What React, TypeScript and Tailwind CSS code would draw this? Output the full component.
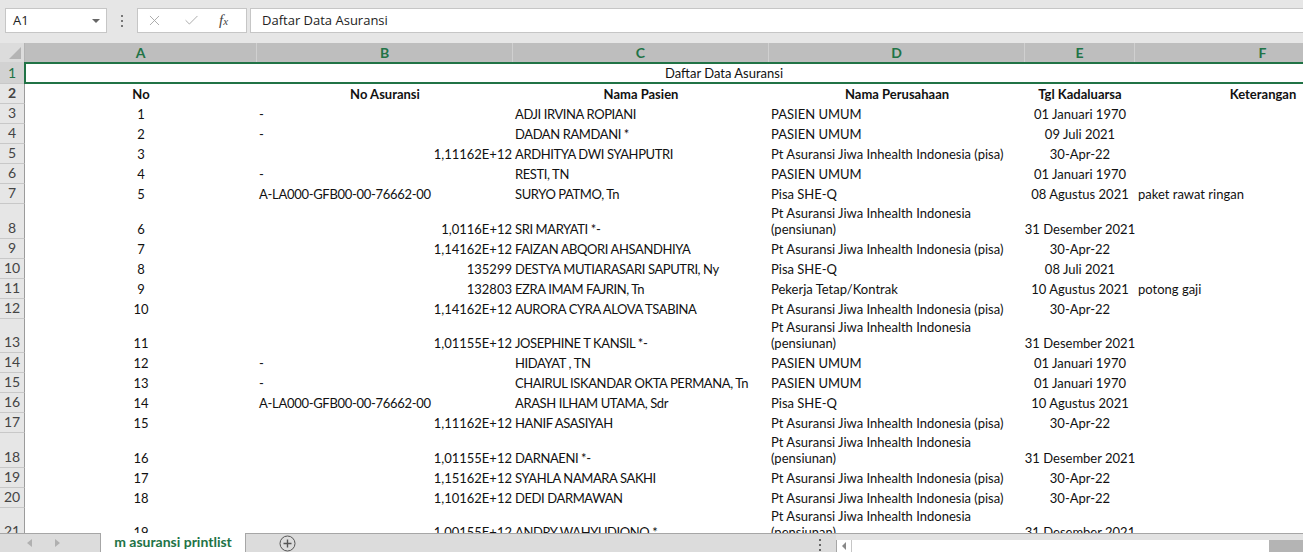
import { X, Check } from 'lucide-react';

type Row = {
  r: number;
  no: string;
  noRight?: boolean;
  nama: string;
  pers: string;
  pers2?: string;
  tgl: string;
  ket?: string;
};

const PISA = 'Pt Asuransi Jiwa Inhealth Indonesia (pisa)';
const PT = 'Pt Asuransi Jiwa Inhealth Indonesia';

const rows: Row[] = [
  { r: 1, no: '-', nama: 'ADJI IRVINA ROPIANI', pers: 'PASIEN UMUM', tgl: '01 Januari 1970' },
  { r: 2, no: '-', nama: 'DADAN RAMDANI *', pers: 'PASIEN UMUM', tgl: '09 Juli 2021' },
  { r: 3, no: '1,11162E+12', noRight: true, nama: 'ARDHITYA DWI SYAHPUTRI', pers: PISA, tgl: '30-Apr-22' },
  { r: 4, no: '-', nama: 'RESTI, TN', pers: 'PASIEN UMUM', tgl: '01 Januari 1970' },
  { r: 5, no: 'A-LA000-GFB00-00-76662-00', nama: 'SURYO PATMO, Tn', pers: 'Pisa SHE-Q', tgl: '08 Agustus 2021', ket: 'paket rawat ringan' },
  { r: 6, no: '1,0116E+12', noRight: true, nama: 'SRI MARYATI *-', pers: PT, pers2: '(pensiunan)', tgl: '31 Desember 2021' },
  { r: 7, no: '1,14162E+12', noRight: true, nama: 'FAIZAN ABQORI AHSANDHIYA', pers: PISA, tgl: '30-Apr-22' },
  { r: 8, no: '135299', noRight: true, nama: 'DESTYA MUTIARASARI SAPUTRI, Ny', pers: 'Pisa SHE-Q', tgl: '08 Juli 2021' },
  { r: 9, no: '132803', noRight: true, nama: 'EZRA IMAM FAJRIN, Tn', pers: 'Pekerja Tetap/Kontrak', tgl: '10 Agustus 2021', ket: 'potong gaji' },
  { r: 10, no: '1,14162E+12', noRight: true, nama: 'AURORA CYRA ALOVA TSABINA', pers: PISA, tgl: '30-Apr-22' },
  { r: 11, no: '1,01155E+12', noRight: true, nama: 'JOSEPHINE T KANSIL *-', pers: PT, pers2: '(pensiunan)', tgl: '31 Desember 2021' },
  { r: 12, no: '-', nama: 'HIDAYAT , TN', pers: 'PASIEN UMUM', tgl: '01 Januari 1970' },
  { r: 13, no: '-', nama: 'CHAIRUL ISKANDAR OKTA PERMANA, Tn', pers: 'PASIEN UMUM', tgl: '01 Januari 1970' },
  { r: 14, no: 'A-LA000-GFB00-00-76662-00', nama: 'ARASH ILHAM UTAMA, Sdr', pers: 'Pisa SHE-Q', tgl: '10 Agustus 2021' },
  { r: 15, no: '1,11162E+12', noRight: true, nama: 'HANIF ASASIYAH', pers: PISA, tgl: '30-Apr-22' },
  { r: 16, no: '1,01155E+12', noRight: true, nama: 'DARNAENI *-', pers: PT, pers2: '(pensiunan)', tgl: '31 Desember 2021' },
  { r: 17, no: '1,15162E+12', noRight: true, nama: 'SYAHLA NAMARA SAKHI', pers: PISA, tgl: '30-Apr-22' },
  { r: 18, no: '1,10162E+12', noRight: true, nama: 'DEDI DARMAWAN', pers: PISA, tgl: '30-Apr-22' },
  { r: 19, no: '1,00155E+12', noRight: true, nama: 'ANDRY WAHYUDIONO *', pers: PT, pers2: '(pensiunan)', tgl: '31 Desember 2021' },
];

const cols = [
  { l: 'A', w: 'w-[232px]' },
  { l: 'B', w: 'w-[256px]' },
  { l: 'C', w: 'w-[256px]' },
  { l: 'D', w: 'w-[256px]' },
  { l: 'E', w: 'w-[110px]' },
  { l: 'F', w: 'w-[256px]' },
];

const sheetFont = "font-['Lato','Liberation_Sans',sans-serif]";

function RowHead({ n, active }: { n: number; active?: boolean }) {
  return (
    <div
      className={`w-[25px] shrink-0 flex items-end justify-center pb-[2px] leading-[16px] text-[14px] border-r border-b border-r-[#9b9b9b] border-b-[#c8c8c8] ${
        active ? 'bg-[#d2d2d2] text-[#217346]' : 'bg-[#e6e6e6] text-[#444]'
      }`}
    >
      {n}
    </div>
  );
}

export default function App() {
  return (
    <div className={`w-[1303px] h-[552px] overflow-hidden flex flex-col bg-white ${sheetFont}`}>
      {/* formula bar */}
      <div className="h-[43px] shrink-0 bg-[#e6e6e6] flex items-start pt-[8px] font-['Open_Sans',sans-serif]">
        <div className="ml-[5px] w-[102px] h-[25px] bg-white border border-[#c6c6c6] flex items-center justify-between pl-[7px] pr-[6px]">
          <span className="text-[13px] text-[#222]">A1</span>
          <span className="w-0 h-0 border-l-[4px] border-r-[4px] border-t-[4px] border-l-transparent border-r-transparent border-t-[#666]" />
        </div>
        <div className="w-[30px] h-[25px] flex flex-col items-center justify-center gap-[3px]">
          <span className="w-[2px] h-[2px] bg-[#777]" />
          <span className="w-[2px] h-[2px] bg-[#777]" />
          <span className="w-[2px] h-[2px] bg-[#777]" />
        </div>
        <div className="w-[110px] h-[25px] bg-white border border-[#c6c6c6] flex items-center pl-[8px] gap-[20px]">
          <X className="w-[17px] h-[17px] text-[#a6a6a6]" strokeWidth={1.3} />
          <Check className="w-[17px] h-[17px] text-[#a6a6a6]" strokeWidth={1.3} />
          <span className="font-['Liberation_Serif',serif] italic text-[15px] text-[#444] leading-none -ml-[1px]">
            f<span className="text-[11px]">x</span>
          </span>
        </div>
        <div className="ml-[3px] flex-1 h-[25px] bg-white border border-r-0 border-[#c6c6c6] flex items-center pl-[11px] text-[13px] text-[#222]">
          Daftar Data Asuransi
        </div>
      </div>

      {/* column headers */}
      <div className="h-[19px] shrink-0 flex bg-[#dcdcdc]">
        <div className="w-[25px] shrink-0 relative border-r border-[#b4b4b4]">
          <svg className="absolute right-[3px] bottom-[3px]" width="12" height="12" viewBox="0 0 12 12">
            <path d="M12 0 L12 12 L0 12 Z" fill="#b4b4b4" />
          </svg>
        </div>
        {cols.map((c) => (
          <div
            key={c.l}
            className={`${c.w} shrink-0 bg-[#bebebe] border-r border-[#d0d0d0] flex items-center justify-center text-[14px] font-bold text-[#217346]`}
          >
            {c.l}
          </div>
        ))}
      </div>

      {/* sheet */}
      <div className="flex-1 overflow-hidden text-[13px] text-[#111]">
        <div className="flex h-[22px]">
          <RowHead n={1} active />
          <div className="-ml-px w-[1400px] shrink-0 border-2 border-[#217346] flex items-center justify-center pt-[1px]">
            Daftar Data Asuransi
          </div>
        </div>
        <div className="flex h-[20px] font-bold">
          <RowHead n={2} />
          <div className="w-[232px] shrink-0 flex items-end justify-center pb-[2px] leading-[16px]">No</div>
          <div className="w-[256px] shrink-0 flex items-end justify-center pb-[2px] leading-[16px]">No Asuransi</div>
          <div className="w-[256px] shrink-0 flex items-end justify-center pb-[2px] leading-[16px]">Nama Pasien</div>
          <div className="w-[256px] shrink-0 flex items-end justify-center pb-[2px] leading-[16px]">Nama Perusahaan</div>
          <div className="w-[110px] shrink-0 flex items-end justify-center pb-[2px] leading-[16px] whitespace-nowrap">Tgl Kadaluarsa</div>
          <div className="w-[256px] shrink-0 flex items-end justify-center pb-[2px] leading-[16px]">Keterangan</div>
        </div>
        {rows.map((row, i) => (
          <div key={row.r} className={`flex ${row.pers2 ? 'h-[34.5px]' : 'h-[20px]'}`}>
            <RowHead n={i + 3} />
            <div className="w-[232px] shrink-0 flex items-end justify-center pb-[2px] leading-[16px]">{row.r}</div>
            <div
              className={`w-[256px] shrink-0 flex items-end pb-[2px] leading-[16px] ${
                row.noRight ? 'justify-end pr-[1px]' : 'pl-[2px] tracking-[-0.3px]'
              }`}
            >
              {row.no}
            </div>
            <div className="w-[256px] shrink-0 overflow-hidden flex items-end pb-[2px] pl-[2px] leading-[16px] whitespace-nowrap tracking-[-0.4px]">
              {row.nama}
            </div>
            <div className="w-[256px] shrink-0 flex flex-col justify-end pb-[2px] pl-[2px] leading-[16px] whitespace-nowrap">
              <span>{row.pers}</span>
              {row.pers2 && <span>{row.pers2}</span>}
            </div>
            <div className="w-[110px] shrink-0 flex items-end justify-center pb-[2px] leading-[16px] whitespace-nowrap">
              {row.tgl}
            </div>
            <div className="w-[256px] shrink-0 flex items-end pb-[2px] pl-[3px] leading-[16px] whitespace-nowrap">
              {row.ket}
            </div>
          </div>
        ))}
      </div>

      {/* sheet tabs */}
      <div className="h-[19px] shrink-0 flex bg-[#dcdcdc] border-t border-[#a6a6a6]">
        <div className="w-[100px] shrink-0 flex items-center">
          <span className="ml-[27px] w-0 h-0 border-t-[4px] border-b-[4px] border-r-[5px] border-t-transparent border-b-transparent border-r-[#b0b0b0]" />
          <span className="ml-[23px] w-0 h-0 border-t-[4px] border-b-[4px] border-l-[5px] border-t-transparent border-b-transparent border-l-[#b0b0b0]" />
        </div>
        <div className="w-[146px] shrink-0 -mt-px bg-white border-x border-[#a6a6a6] flex items-start justify-center pt-[1px] text-[14px] font-bold text-[#217346] leading-[16px]">
          m asuransi printlist
        </div>
        <div className="w-[566px] shrink-0 flex items-center">
          <svg className="ml-[33px] mt-[1px]" width="17" height="17" viewBox="0 0 17 17">
            <circle cx="8.5" cy="8.5" r="7.5" fill="none" stroke="#555" strokeWidth="1" />
            <path d="M8.5 4.5 V12.5 M4.5 8.5 H12.5" stroke="#555" strokeWidth="1.4" />
          </svg>
        </div>
        <div className="w-[16px] shrink-0 flex flex-col items-center pt-[5px] gap-[3px]">
          <span className="w-[2px] h-[2px] bg-[#666]" />
          <span className="w-[2px] h-[2px] bg-[#666]" />
          <span className="w-[2px] h-[2px] bg-[#666]" />
        </div>
        <div className="w-[8px] shrink-0" />
        <div className="flex-1 flex flex-col">
          <div className="h-[6px] bg-[#e2e2e2]" />
          <div className="flex-1 flex">
            <div className="w-[433px] shrink-0 bg-white border-l border-[#a6a6a6] flex">
              <div className="w-[15px] border-r border-[#c6c6c6] flex items-center justify-center">
                <span className="w-0 h-0 border-t-[4px] border-b-[4px] border-r-[4px] border-t-transparent border-b-transparent border-r-[#888]" />
              </div>
            </div>
            <div className="flex-1 bg-[#b4b4b4]" />
          </div>
        </div>
      </div>
    </div>
  );
}
